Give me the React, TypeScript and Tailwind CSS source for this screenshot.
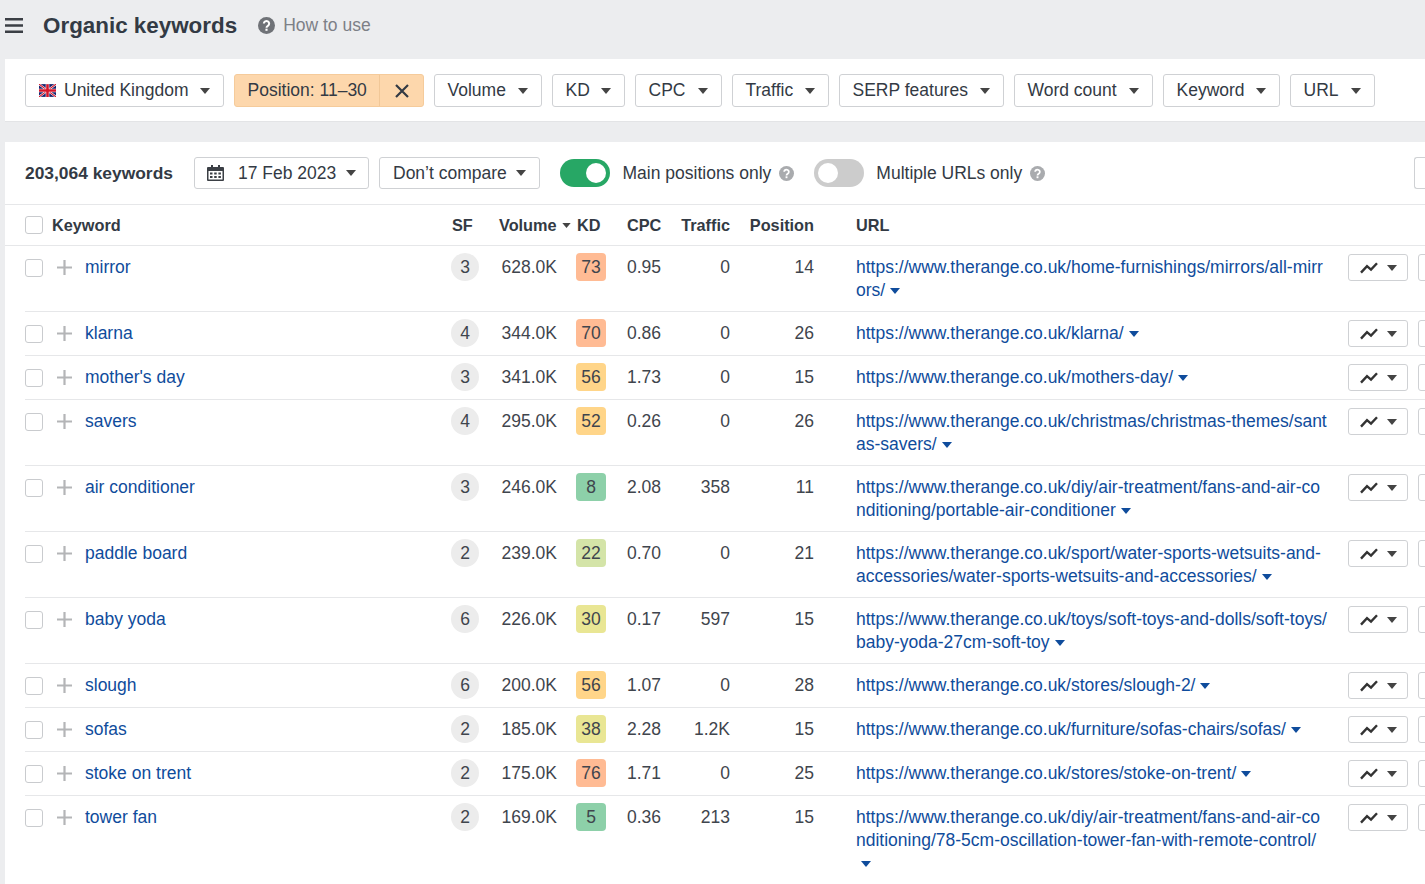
import React from "react";

const Caret = ({ className = "w-[10px] h-[6px] text-[#444]" }: { className?: string }) => (
  <svg viewBox="0 0 10 6" className={`${className} shrink-0`}>
    <path d="M0 0h10L5 6z" fill="currentColor" />
  </svg>
);

const Help = ({ cls }: { cls: string }) => (
  <svg viewBox="0 0 16 16" className={`${cls} shrink-0`}>
    <circle cx="8" cy="8" r="8" fill="currentColor" />
    <path d="M5.5 6.2a2.5 2.4 0 1 1 3.8 2.1c-.9.5-1.3.8-1.3 1.7" fill="none" stroke="#fff" strokeWidth="1.9" />
    <rect x="7" y="11" width="2" height="2" fill="#fff" />
  </svg>
);

const Flag = () => (
  <svg viewBox="0 0 16 12" className="w-[17px] h-[13px] shrink-0">
    <rect width="16" height="12" fill="#16236e" />
    <path d="M0 0l16 12M16 0L0 12" stroke="#fff" strokeWidth="2" />
    <path d="M0 0l16 12M16 0L0 12" stroke="#d5152a" strokeWidth="1.1" />
    <path d="M8 0v12M0 6h16" stroke="#fff" strokeWidth="3.4" />
    <path d="M8 0v12M0 6h16" stroke="#d5152a" strokeWidth="2.4" />
  </svg>
);

const Btn = ({ w, label }: { w: string; label: string }) => (
  <button className={`${w} h-[33px] shrink-0 flex items-center justify-between pl-[12.5px] pr-[13px] bg-white border border-[#cfd1d4] rounded-[3px] text-[#333a44] whitespace-nowrap`}>
    <span>{label}</span>
    <Caret />
  </button>
);

const Toggle = ({ on }: { on: boolean }) => (
  <div className={`w-[50px] h-[28px] rounded-full shrink-0 flex items-center px-[4px] ${on ? "bg-[#27a765] justify-end" : "bg-[#cccccc] justify-start"}`}>
    <div className="w-[20px] h-[20px] rounded-full bg-white" />
  </div>
);

const Spark = () => (
  <svg viewBox="0 0 18 12" className="w-[18px] h-[12px] shrink-0">
    <path d="M1 10.6L7 4.2l4 3.4L17 1.2" fill="none" stroke="#333" strokeWidth="2.4" />
  </svg>
);

type Row = { k: string; sf: number; vol: string; kd: number; kc: string; cpc: string; tr: string; pos: number; url: string };

const rows: Row[] = [
  { k: "mirror", sf: 3, vol: "628.0K", kd: 73, kc: "bg-[#ffbb94]", cpc: "0.95", tr: "0", pos: 14, url: "https://www.therange.co.uk/home-furnishings/mirrors/all-mirrors/" },
  { k: "klarna", sf: 4, vol: "344.0K", kd: 70, kc: "bg-[#ffbb94]", cpc: "0.86", tr: "0", pos: 26, url: "https://www.therange.co.uk/klarna/" },
  { k: "mother's day", sf: 3, vol: "341.0K", kd: 56, kc: "bg-[#ffd589]", cpc: "1.73", tr: "0", pos: 15, url: "https://www.therange.co.uk/mothers-day/" },
  { k: "savers", sf: 4, vol: "295.0K", kd: 52, kc: "bg-[#ffd589]", cpc: "0.26", tr: "0", pos: 26, url: "https://www.therange.co.uk/christmas/christmas-themes/santas-savers/" },
  { k: "air conditioner", sf: 3, vol: "246.0K", kd: 8, kc: "bg-[#8dd0a9]", cpc: "2.08", tr: "358", pos: 11, url: "https://www.therange.co.uk/diy/air-treatment/fans-and-air-conditioning/portable-air-conditioner" },
  { k: "paddle board", sf: 2, vol: "239.0K", kd: 22, kc: "bg-[#d4e4a8]", cpc: "0.70", tr: "0", pos: 21, url: "https://www.therange.co.uk/sport/water-sports-wetsuits-and-accessories/water-sports-wetsuits-and-accessories/" },
  { k: "baby yoda", sf: 6, vol: "226.0K", kd: 30, kc: "bg-[#e9e694]", cpc: "0.17", tr: "597", pos: 15, url: "https://www.therange.co.uk/toys/soft-toys-and-dolls/soft-toys/baby-yoda-27cm-soft-toy" },
  { k: "slough", sf: 6, vol: "200.0K", kd: 56, kc: "bg-[#ffd589]", cpc: "1.07", tr: "0", pos: 28, url: "https://www.therange.co.uk/stores/slough-2/" },
  { k: "sofas", sf: 2, vol: "185.0K", kd: 38, kc: "bg-[#e9e694]", cpc: "2.28", tr: "1.2K", pos: 15, url: "https://www.therange.co.uk/furniture/sofas-chairs/sofas/" },
  { k: "stoke on trent", sf: 2, vol: "175.0K", kd: 76, kc: "bg-[#ffbb94]", cpc: "1.71", tr: "0", pos: 25, url: "https://www.therange.co.uk/stores/stoke-on-trent/" },
  { k: "tower fan", sf: 2, vol: "169.0K", kd: 5, kc: "bg-[#8dd0a9]", cpc: "0.36", tr: "213", pos: 15, url: "https://www.therange.co.uk/diy/air-treatment/fans-and-air-conditioning/78-5cm-oscillation-tower-fan-with-remote-control/" },
];

export default function App() {
  return (
    <div className="w-[1425px] h-[884px] overflow-hidden bg-[#ecedef] text-[17.5px] leading-[23px] text-[#333a44] [font-family:'Liberation_Sans',Arial,sans-serif]">
      <header className="h-[59px] flex items-center pl-[5px] pb-[9px] whitespace-nowrap">
        <svg viewBox="0 0 18 15" className="w-[18px] h-[15px] shrink-0 text-[#3b3f45]">
          <path d="M0 1.2h18M0 7.5h18M0 13.8h18" stroke="currentColor" strokeWidth="2.4" />
        </svg>
        <h1 className="ml-[20px] text-[22.4px] font-bold text-[#333a44]">Organic keywords</h1>
        <Help cls="ml-[21px] w-[17px] h-[17px] text-[#6f7277]" />
        <span className="ml-[8px] text-[#7d8087]">How to use</span>
      </header>

      <section className="ml-[5px] h-[63px] bg-white border-b border-[#e3e4e6] flex items-center pl-[20px] pt-[1px] whitespace-nowrap">
        <button className="w-[199px] h-[33px] shrink-0 flex items-center px-[13px] bg-white border border-[#cfd1d4] rounded-[3px]">
          <Flag />
          <span className="ml-[8px]">United Kingdom</span>
          <span className="ml-auto"><Caret /></span>
        </button>
        <div className="ml-[10px] w-[190px] h-[33px] shrink-0 flex bg-[#fdd7ac] border border-[#f5cb9b] rounded-[3px]">
          <span className="w-[145px] pl-[12.5px] border-r border-[#f1c797] flex items-center">Position: 11–30</span>
          <span className="flex-1 flex items-center justify-center">
            <svg viewBox="0 0 14 14" className="w-[14px] h-[14px]"><path d="M1 1l12 12M13 1L1 13" stroke="#333a44" strokeWidth="2.2" /></svg>
          </span>
        </div>
        <div className="ml-[10px] flex gap-[10px]">
          <Btn w="w-[108px]" label="Volume" />
          <Btn w="w-[73px]" label="KD" />
          <Btn w="w-[87px]" label="CPC" />
          <Btn w="w-[97px]" label="Traffic" />
          <Btn w="w-[165px]" label="SERP features" />
          <Btn w="w-[139px]" label="Word count" />
          <Btn w="w-[117px]" label="Keyword" />
          <Btn w="w-[85px]" label="URL" />
        </div>
      </section>

      <main className="ml-[5px] mt-[20px] bg-white h-[742px] overflow-hidden">
        <div className="h-[63px] border-b border-[#e6e7e9] flex items-center pl-[20px] whitespace-nowrap">
          <strong className="w-[169px] shrink-0 font-bold text-[17.4px]">203,064 keywords</strong>
          <button className="w-[175px] h-[32px] shrink-0 flex items-center px-[12px] border border-[#cfd1d4] rounded-[3px]">
            <svg viewBox="0 0 17 16" className="w-[17px] h-[16px] shrink-0 text-[#3b3f45]">
              <path fill="currentColor" d="M1 2h3V0h2v2h5V0h2v2h3a1 1 0 0 1 1 1v12a1 1 0 0 1-1 1H1a1 1 0 0 1-1-1V3a1 1 0 0 1 1-1zm.5 4v8.5h14V6z" />
              <path fill="currentColor" d="M3 7.5h2.5v2H3zM7.2 7.5h2.5v2H7.2zM11.4 7.5h2.5v2h-2.5zM3 11h2.5v2H3zM7.2 11h2.5v2H7.2zM11.4 11h2.5v2h-2.5z" />
            </svg>
            <span className="ml-[14px]">17 Feb 2023</span>
            <span className="ml-auto"><Caret /></span>
          </button>
          <button className="ml-[10px] w-[161px] h-[32px] shrink-0 flex items-center justify-between px-[13px] border border-[#cfd1d4] rounded-[3px]">
            <span>Don’t compare</span>
            <Caret />
          </button>
          <div className="ml-[20px]"><Toggle on /></div>
          <span className="ml-[12.5px]">Main positions only</span>
          <Help cls="ml-[7.5px] w-[15px] h-[15px] text-[#a9abae]" />
          <div className="ml-[20px]"><Toggle on={false} /></div>
          <span className="ml-[12.5px]">Multiple URLs only</span>
          <Help cls="ml-[7.5px] w-[15px] h-[15px] text-[#a9abae]" />
          <div className="ml-auto w-[11px] h-[32px] border border-r-0 border-[#cfd1d4] rounded-l-[3px]" />
        </div>

        <div className="h-[41px] pl-[20px] border-b border-[#e6e7e9] flex items-center font-bold text-[16.3px] whitespace-nowrap">
          <span className="w-[18px] h-[18px] shrink-0 bg-white border border-[#c9cbce] rounded-[3px]" />
          <span className="ml-[9px] w-[400px] shrink-0">Keyword</span>
          <span className="w-[47px] shrink-0">SF</span>
          <span className="w-[78px] shrink-0 flex items-center gap-[5px]">Volume<Caret className="w-[9px] h-[5px] text-[#444]" /></span>
          <span className="w-[50px] shrink-0">KD</span>
          <span className="w-[34px] shrink-0">CPC</span>
          <span className="w-[69px] shrink-0 text-right">Traffic</span>
          <span className="w-[84px] shrink-0 text-right">Position</span>
          <span className="ml-[42px]">URL</span>
        </div>

        {rows.map((r) => (
          <div key={r.k} className="ml-[20px] min-h-[44px] pt-[10px] pb-[9px] flex items-start border-b border-[#e6e7e9] text-[#3f454d]">
            <span className="w-[18px] h-[18px] mt-[3px] -mb-[3px] shrink-0 bg-white border border-[#c9cbce] rounded-[3px]" />
            <svg viewBox="0 0 15 15" className="ml-[14px] mt-[4px] -mb-[4px] w-[15px] h-[15px] shrink-0"><path d="M7.5 0v15M0 7.5h15" stroke="#b4b5b7" strokeWidth="2.2" /></svg>
            <a className="ml-[13px] w-[366px] shrink-0 text-[#0f4c9c]">{r.k}</a>
            <span className="w-[28px] h-[28px] -mt-[3px] -mb-[3px] shrink-0 rounded-full bg-[#ececec] flex items-center justify-center">{r.sf}</span>
            <span className="w-[78px] shrink-0 text-right">{r.vol}</span>
            <span className={`ml-[19px] w-[30px] h-[28px] -mt-[3px] -mb-[3px] shrink-0 rounded-[4px] flex items-center justify-center ${r.kc}`}>{r.kd}</span>
            <span className="ml-[21px] w-[34px] shrink-0">{r.cpc}</span>
            <span className="w-[69px] shrink-0 text-right">{r.tr}</span>
            <span className="w-[84px] shrink-0 text-right">{r.pos}</span>
            <a className="ml-[42px] w-[472px] shrink-0 text-[#0f4c9c] break-all">
              {r.url}
              <span className="inline-block ml-[5px] align-middle"><Caret className="w-[10px] h-[6px] text-[#0f4c9c]" /></span>
            </a>
            <button className="ml-[20px] w-[60px] h-[27px] -mt-[2px] -mb-[4px] shrink-0 flex items-center justify-between pl-[11px] pr-[10px] border border-[#cfd1d4] rounded-[3px]">
              <Spark />
              <Caret />
            </button>
            <span className="ml-[10px] w-[20px] h-[27px] -mt-[2px] -mb-[4px] shrink-0 border border-[#cfd1d4] rounded-[3px]" />
          </div>
        ))}
      </main>
    </div>
  );
}
